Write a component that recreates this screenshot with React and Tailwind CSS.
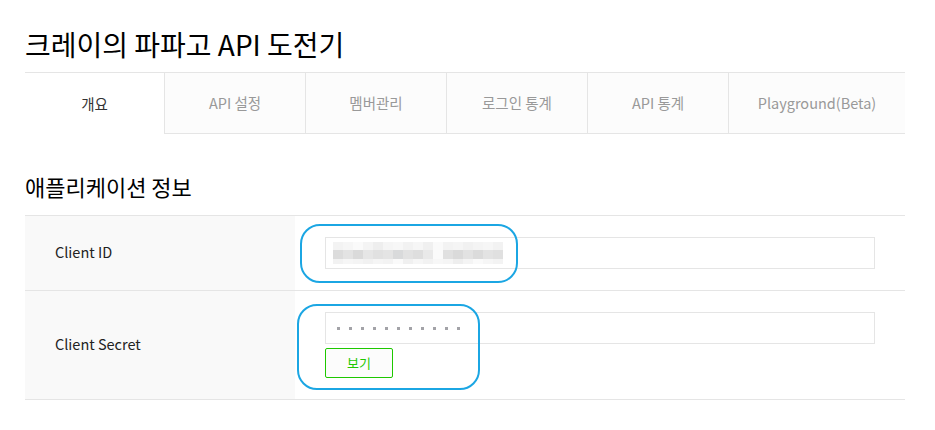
import React from 'react';

const tabs = [
  { label: '개요', w: 'w-[139px]', active: true },
  { label: 'API 설정', w: 'w-[141px]' },
  { label: '멤버관리', w: 'w-[141px]' },
  { label: '로그인 통계', w: 'w-[141px]' },
  { label: 'API 통계', w: 'w-[141px]' },
  { label: 'Playground(Beta)', w: 'w-[177px]' },
];

// blurred client id, drawn as a mosaic
const mosaicTop = ['#f3f3f3', '#f6f6f6', '#fafafa', '#f4f4f4', '#eeeeee', '#f5f5f5', '#f7f7f7', '#f2f2f2', '#f6f6f6', '#f0f0f0', '#fafafa', '#f3f3f3', '#f5f5f5', '#f1f1f1', '#f4f4f4', '#f6f6f6', '#f2f2f2'];
const mosaicMid = ['#dcdcdc', '#e3e3e3', '#dadada', '#e6e6e6', '#e1e1e1', '#e4e4e4', '#d9dadb', '#e2e2e2', '#dedede', '#e9e9e9', '#fafafa', '#e0e0e0', '#dadada', '#e2e2e2', '#dbdbdb', '#e3e3e3', '#e0e0e0'];

const App = () => {
  return (
    <div className="w-[935px] h-[430px] bg-white px-[25px] font-['Noto_Sans_CJK_KR','Noto_Sans',sans-serif] text-[#333]">
      <h1 className="h-[72px] pt-[24px] text-[28px] leading-[40px] text-black">크레이의 파파고 API 도전기</h1>

      <div className="flex w-[880px] h-[62px] border-t border-b border-[#e5e5e5]">
        {tabs.map((t) => (
          <div
            key={t.label}
            className={`${t.w} flex items-center justify-center text-[14.5px] ${
              t.active
                ? 'bg-white text-[#333] -mb-px h-[61px]'
                : 'bg-[#fcfcfc] text-[#999] border-l border-[#e5e5e5]'
            }`}
          >
            {t.label}
          </div>
        ))}
      </div>

      <h2 className="mt-[37px] h-[44px] text-[22px] leading-[30px] text-black">애플리케이션 정보</h2>

      <div className="relative w-[880px] border-t border-[#e5e5e5]">
        <div className="flex h-[75px] border-b border-[#e5e5e5]">
          <div className="w-[270px] bg-[#f9f9f9] pl-[30px] pb-[3px] flex items-center text-[14.5px] text-[#222]">Client ID</div>
          <div className="pl-[30px] pt-[21px]">
            <div className="w-[550px] h-[32px] border border-[#e5e5e5] bg-white flex items-center pl-[7px]">
              <div className="flex flex-col">
                <div className="flex">
                  {mosaicTop.map((c, i) => (
                    <span key={i} className="w-[10px] h-[8px]" style={{ background: c }} />
                  ))}
                </div>
                <div className="flex">
                  {mosaicMid.map((c, i) => (
                    <span key={i} className="w-[10px] h-[9px]" style={{ background: c }} />
                  ))}
                </div>
                <div className="flex">
                  {mosaicTop.slice().reverse().map((c, i) => (
                    <span key={i} className="w-[10px] h-[5px]" style={{ background: c }} />
                  ))}
                </div>
              </div>
            </div>
          </div>
        </div>

        <div className="flex h-[109px] border-b border-[#e5e5e5]">
          <div className="w-[270px] bg-[#f9f9f9] pl-[30px] pb-[3px] flex items-center text-[14.5px] text-[#222]">Client Secret</div>
          <div className="pl-[30px] pt-[21px] flex flex-col gap-[4px]">
            <div className="w-[550px] h-[32px] border border-[#e5e5e5] bg-white flex items-center pl-[11px] gap-[9px]">
              {Array.from({ length: 11 }).map((_, i) => (
                <span key={i} className="w-[3px] h-[3px] bg-[#a3a3a8]" />
              ))}
            </div>
            <button className="w-[68px] h-[30px] border border-[#1ec800] rounded-[2px] bg-[#fcfcfc] text-[#1ec800] text-[13px]">
              보기
            </button>
          </div>
        </div>

        <div className="absolute left-[275px] top-[8px] w-[218px] h-[59px] rounded-[20px] border-[2.5px] border-[#1ba6e3]" />
        <div className="absolute left-[272px] top-[88px] w-[183px] h-[86px] rounded-[20px] border-[2.5px] border-[#1ba6e3]" />
      </div>
    </div>
  );
};

export default App;
